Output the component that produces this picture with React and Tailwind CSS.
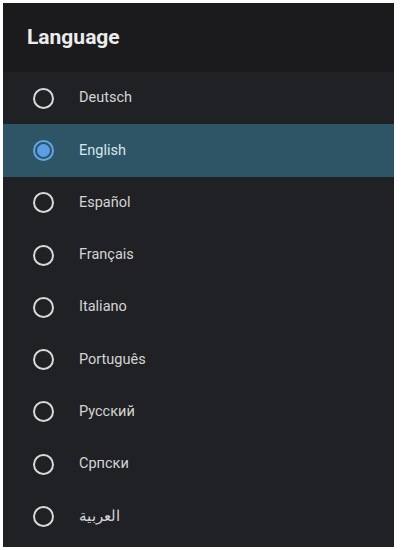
import React from "react";

// Language picker list, TV settings style
const languages = [
  "Deutsch",
  "English",
  "Español",
  "Français",
  "Italiano",
  "Português",
  "Русский",
  "Српски",
  "العربية",
];

const Radio = ({ checked }) =>
  checked ? (
    <span className="flex h-[21px] w-[21px] items-center justify-center rounded-full border-2 border-[#5fa6e6]">
      <span className="h-[13px] w-[13px] rounded-full bg-[#5a9fe6]" />
    </span>
  ) : (
    <span className="h-[21px] w-[21px] rounded-full border-2 border-[#d9d9d9]" />
  );

export default function App() {
  const selected = "English";

  return (
    <div className="h-[550px] w-[402px] bg-white pl-[3px] pr-[8px] pt-[3px] pb-[3px]">
      <div
        className="flex h-full flex-col bg-[#202125]"
        style={{ fontFamily: "Roboto, 'Noto Sans', sans-serif" }}
      >
        {/* Header */}
        <div className="flex h-[69px] items-center bg-[#1b1b1d] pl-[24px]">
          <h1 className="text-[21px] font-bold text-[#ececec]">Language</h1>
        </div>

        {/* Options */}
        <ul className="flex-1">
          {languages.map((lang) => {
            const isActive = lang === selected;
            return (
              <li
                key={lang}
                className={`${
                  isActive ? "bg-[#2e5565]" : ""
                } flex h-[52.3px] items-center pl-[30px]`}
              >
                <Radio checked={isActive} />
                <span
                  className={`${
                    isActive ? "text-[#d6e6ee]" : "text-[#d4d4d4]"
                  } ml-[25px] text-[14.5px]`}
                >
                  {lang}
                </span>
              </li>
            );
          })}
        </ul>
      </div>
    </div>
  );
}
